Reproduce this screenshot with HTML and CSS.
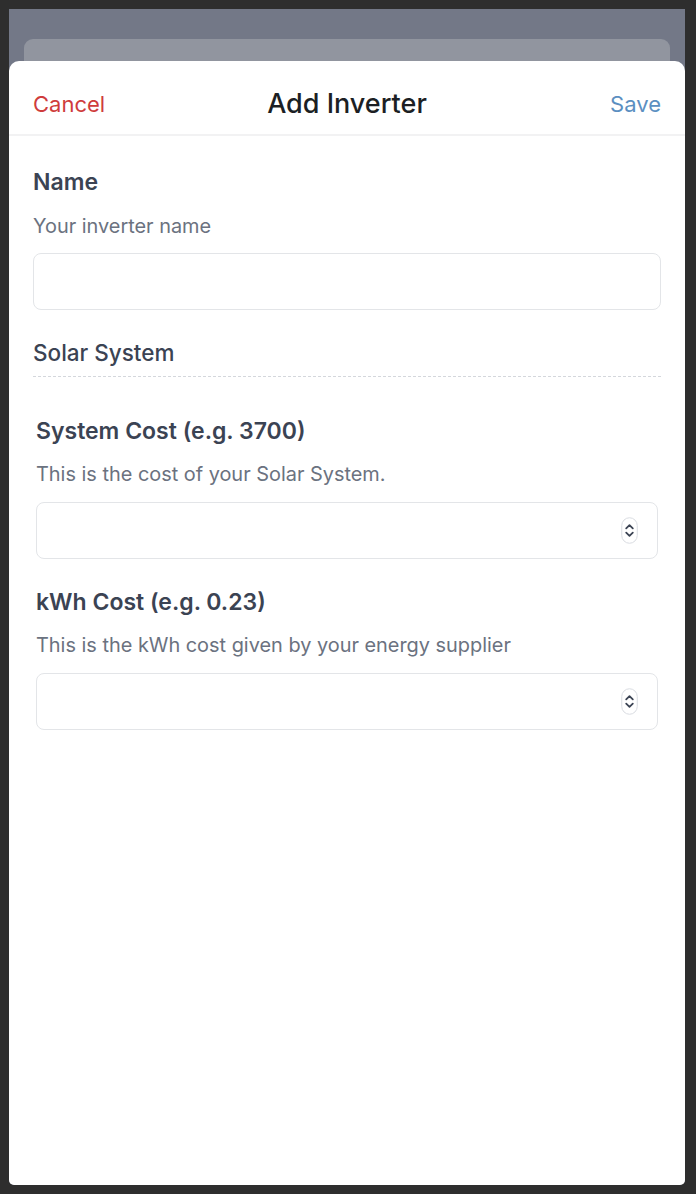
FILE: index.html
```html
<!DOCTYPE html>
<html lang="en">
<head>
    <meta charset="UTF-8">
    <meta name="viewport" content="width=device-width, initial-scale=1.0">
    <title>Add Inverter</title>
    <link rel="stylesheet" href="styles.css">
</head>
<body>

<div class="window">
    <div class="backdrop">
        <div class="back-card"></div>
    </div>

    <div class="sheet">
        <div class="sheet-header">
            <button class="link cancel">Cancel</button>
            <h1>Add Inverter</h1>
            <button class="link save">Save</button>
        </div>

        <form class="sheet-body">
            <div class="field">
                <label for="name">Name</label>
                <p class="hint">Your inverter name</p>
                <input type="text" id="name">
            </div>

            <div class="section-title">Solar System</div>

            <div class="section">
                <div class="field">
                    <label for="system-cost">System Cost (e.g. 3700)</label>
                    <p class="hint">This is the cost of your Solar System.</p>
                    <div class="number-wrap">
                        <input type="number" id="system-cost">
                        <svg class="spinner" width="17" height="27" viewBox="0 0 17 27">
                            <rect x="0.75" y="0.75" width="15.5" height="25.5" rx="7.75" fill="#fff" stroke="#d9dce1"/>
                            <path d="M5.2 11.4 L8.5 8.2 L11.8 11.4" fill="none" stroke="#3b4353" stroke-width="1.8" stroke-linecap="round" stroke-linejoin="round"/>
                            <path d="M5.2 15.6 L8.5 18.8 L11.8 15.6" fill="none" stroke="#3b4353" stroke-width="1.8" stroke-linecap="round" stroke-linejoin="round"/>
                        </svg>
                    </div>
                </div>

                <div class="field">
                    <label for="kwh-cost">kWh Cost (e.g. 0.23)</label>
                    <p class="hint">This is the kWh cost given by your energy supplier</p>
                    <div class="number-wrap">
                        <input type="number" id="kwh-cost">
                        <svg class="spinner" width="17" height="27" viewBox="0 0 17 27">
                            <rect x="0.75" y="0.75" width="15.5" height="25.5" rx="7.75" fill="#fff" stroke="#d9dce1"/>
                            <path d="M5.2 11.4 L8.5 8.2 L11.8 11.4" fill="none" stroke="#3b4353" stroke-width="1.8" stroke-linecap="round" stroke-linejoin="round"/>
                            <path d="M5.2 15.6 L8.5 18.8 L11.8 15.6" fill="none" stroke="#3b4353" stroke-width="1.8" stroke-linecap="round" stroke-linejoin="round"/>
                        </svg>
                    </div>
                </div>
            </div>
        </form>
    </div>
</div>

</body>
</html>
```

FILE: styles.css
```css
body {
    margin: 0;
    background: #2e2e2e;
    font-family: Inter, "Noto Sans", sans-serif;
    height: 1194px;
    overflow: hidden;
}

.window {
    margin: 9px 11px 0 9px;
    height: 1176px;
    display: flex;
    flex-direction: column;
    background: #737887;
    border-radius: 0 0 5px 5px;
    overflow: hidden;
}

.backdrop {
    height: 52px;
    padding: 30px 15px 0 15px;
    box-sizing: border-box;
    flex-shrink: 0;
}

.back-card {
    height: 100%;
    background: #91959f;
    border-radius: 9px 9px 0 0;
}

.sheet {
    flex: 1;
    background: #fff;
    border-radius: 10px 10px 0 0;
}

.sheet-header {
    height: 75px;
    box-sizing: border-box;
    display: grid;
    grid-template-columns: 1fr auto 1fr;
    align-items: center;
    padding: 12px 24px 0;
    border-bottom: 2px solid #f2f2f3;
}

.sheet-header h1 {
    margin: 0;
    font-size: 27px;
    font-weight: 500;
    color: #1c1f24;
}

.link {
    background: none;
    border: none;
    padding: 0;
    font-family: inherit;
    font-size: 22px;
    cursor: pointer;
}

.cancel {
    color: #cf3c3c;
    justify-self: start;
}

.save {
    color: #5b8fc1;
    justify-self: end;
}

.sheet-body {
    padding: 32px 24px 0 24px;
}

.field label {
    display: block;
    font-size: 23px;
    font-weight: 600;
    color: #3b4353;
    line-height: 28px;
}

.hint {
    margin: 18px 0 15px;
    font-size: 19.9px;
    color: #6b7280;
    line-height: 24px;
}

input {
    display: block;
    width: 100%;
    box-sizing: border-box;
    height: 57px;
    border: 1px solid #e3e5e8;
    border-radius: 8px;
    font-family: inherit;
    font-size: 19px;
    padding: 0 14px;
    outline: none;
}

input[type=number] {
    -moz-appearance: textfield;
}

input::-webkit-inner-spin-button,
input::-webkit-outer-spin-button {
    -webkit-appearance: none;
    margin: 0;
}

.section-title {
    margin-top: 29px;
    padding-bottom: 9px;
    font-size: 22.5px;
    font-weight: 500;
    line-height: 28px;
    color: #3b4353;
    border-bottom: 1px dashed #d4d7dc;
}

.section {
    padding: 40px 3px 0;
}

.section .field {
    margin-bottom: 29px;
}

.section .hint {
    margin: 17px 0 16px;
}

.number-wrap {
    position: relative;
}

.spinner {
    position: absolute;
    right: 20px;
    top: 15px;
}
```
